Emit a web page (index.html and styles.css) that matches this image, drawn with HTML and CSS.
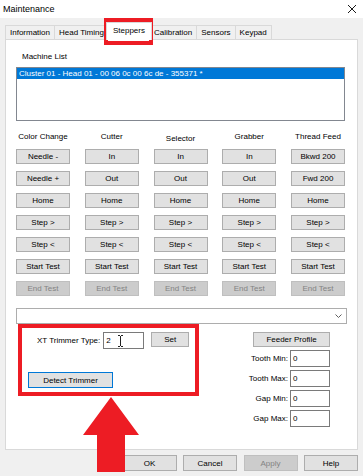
FILE: index.html
```html
<!DOCTYPE html>
<html lang="en">
<head>
<meta charset="UTF-8">
<title>Maintenance</title>
<link rel="stylesheet" href="styles.css">
</head>
<body>
<div class="titlebar">
    <span class="title">Maintenance</span>
    <svg class="close" width="10" height="10" viewBox="0 0 10 10"><path d="M1 1L9 9M9 1L1 9" stroke="#1a1a1a" stroke-width="1"/></svg>
</div>
<div class="tabs">
    <div class="tab first">Information</div>
    <div class="tab">Head Timing</div>
    <div class="tab active">Steppers</div>
    <div class="tab">Calibration</div>
    <div class="tab">Sensors</div>
    <div class="tab">Keypad</div>
</div>
<div class="panel">
    <div class="list-label">Machine List</div>
    <div class="listbox">
        <div class="item selected">Cluster 01 - Head 01 - 00 06 0c 00 6c de - 355371 *</div>
    </div>
    <div class="grid">
        <div class="col-head">Color Change</div>
        <div class="col-head">Cutter</div>
        <div class="col-head low">Selector</div>
        <div class="col-head">Grabber</div>
        <div class="col-head">Thread Feed</div>

        <button class="btn">Needle -</button>
        <button class="btn">In</button>
        <button class="btn">In</button>
        <button class="btn">In</button>
        <button class="btn">Bkwd 200</button>

        <button class="btn">Needle +</button>
        <button class="btn">Out</button>
        <button class="btn">Out</button>
        <button class="btn">Out</button>
        <button class="btn">Fwd 200</button>

        <button class="btn">Home</button>
        <button class="btn">Home</button>
        <button class="btn">Home</button>
        <button class="btn">Home</button>
        <button class="btn">Home</button>

        <button class="btn">Step &gt;</button>
        <button class="btn">Step &gt;</button>
        <button class="btn">Step &gt;</button>
        <button class="btn">Step &gt;</button>
        <button class="btn">Step &gt;</button>

        <button class="btn">Step &lt;</button>
        <button class="btn">Step &lt;</button>
        <button class="btn">Step &lt;</button>
        <button class="btn">Step &lt;</button>
        <button class="btn">Step &lt;</button>

        <button class="btn">Start Test</button>
        <button class="btn">Start Test</button>
        <button class="btn">Start Test</button>
        <button class="btn">Start Test</button>
        <button class="btn">Start Test</button>

        <button class="btn" disabled>End Test</button>
        <button class="btn" disabled>End Test</button>
        <button class="btn" disabled>End Test</button>
        <button class="btn" disabled>End Test</button>
        <button class="btn" disabled>End Test</button>
    </div>
    <div class="combo">
        <svg width="7" height="4" viewBox="0 0 7 4"><path d="M0.5 0.5L3.5 3.5L6.5 0.5" fill="none" stroke="#606060" stroke-width="1"/></svg>
    </div>
    <div class="bottom">
        <div class="trimmer">
            <div class="trimmer-row">
                <label class="field-label">XT Trimmer Type:</label>
                <div class="textbox">2
                    <svg class="ibeam" width="5" height="12" viewBox="0 0 5 12"><path d="M0 0.5H2M3 0.5H5M2.5 1V11M0 11.5H2M3 11.5H5" stroke="#222" stroke-width="1" fill="none"/></svg>
                </div>
                <button class="btn btn-set">Set</button>
            </div>
            <button class="btn btn-default">Detect Trimmer</button>
        </div>
        <div class="feeder">
            <button class="btn btn-feeder">Feeder Profile</button>
            <div class="field"><label class="field-label">Tooth Min:</label><div class="textbox small">0</div></div>
            <div class="field"><label class="field-label">Tooth Max:</label><div class="textbox small">0</div></div>
            <div class="field"><label class="field-label">Gap Min:</label><div class="textbox small">0</div></div>
            <div class="field"><label class="field-label">Gap Max:</label><div class="textbox small">0</div></div>
        </div>
    </div>
</div>
<div class="actions">
    <button class="btn btn-action">OK</button>
    <button class="btn btn-action">Cancel</button>
    <button class="btn btn-action" disabled>Apply</button>
    <button class="btn btn-action">Help</button>
</div>

<div class="mark mark-tab"></div>
<div class="mark mark-trimmer"></div>
<svg class="arrow" width="363" height="476" viewBox="0 0 363 476">
    <polygon points="111,397 139,435 125,435 125,472 97,472 97,435 83,435" fill="#ed1c24"/>
</svg>
</body>
</html>
```

FILE: styles.css
```css
* {
    box-sizing: border-box;
}
body {
    margin: 0;
    width: 363px;
    height: 476px;
    overflow: hidden;
    position: relative;
    background-color: #f0f0f0;
    font-family: "Liberation Sans", Arial, sans-serif;
    font-size: 8px;
    color: #000;
}
.titlebar {
    height: 18px;
    background-color: #fff;
    display: flex;
    align-items: center;
    justify-content: space-between;
    padding: 0 6px 0 3px;
}
.title {
    font-size: 9px;
}
.tabs {
    display: flex;
    align-items: flex-end;
    height: 21px;
    padding-left: 5px;
}
.tab {
    height: 14px;
    line-height: 13px;
    padding: 0 4px;
    border: 1px solid #d9d9d9;
    border-bottom: none;
    border-left: none;
    background-color: #f0f0f0;
    white-space: nowrap;
}
.tab.first {
    border-left: 1px solid #d9d9d9;
}
.tab.active {
    height: 18px;
    line-height: 15px;
    padding: 0 6px;
    margin: 0 -2px -1px -3px;
    border-left: 1px solid #d9d9d9;
    background-color: #fff;
    position: relative;
    z-index: 1;
}
.panel {
    margin-left: 5px;
    width: 353px;
    height: 411px;
    background-color: #fff;
    border: 1px solid #d9d9d9;
    padding: 12px 0 0 10px;
}
.list-label {
    margin-left: 6px;
    line-height: 10px;
}
.listbox {
    margin-top: 5px;
    width: 329px;
    height: 54px;
    border: 1px solid #828790;
}
.item {
    line-height: 11px;
    padding-left: 2px;
    white-space: nowrap;
}
.item.selected {
    background-color: #0078d7;
    color: #fff;
}
.grid {
    margin-top: 11px;
    width: 329px;
    display: grid;
    grid-template-columns: repeat(5, 54px);
    grid-template-rows: 10px;
    grid-auto-rows: 15px;
    justify-content: space-between;
    row-gap: 7px;
}
.col-head {
    text-align: center;
    line-height: 10px;
    white-space: nowrap;
}
.col-head.low {
    padding-top: 2px;
}
.btn {
    height: 15px;
    padding: 0;
    font: inherit;
    line-height: 13px;
    color: #000;
    background-color: #e1e1e1;
    border: 1px solid #adadad;
    white-space: nowrap;
}
.btn:disabled {
    background-color: #cccccc;
    border-color: #bfbfbf;
    color: #838383;
}
.combo {
    margin-top: 12px;
    width: 331px;
    height: 16px;
    border: 1px solid #adadad;
    display: flex;
    align-items: center;
    justify-content: flex-end;
    padding-right: 4px;
}
.bottom {
    display: flex;
    margin-top: 8px;
}
.trimmer {
    width: 224px;
    display: flex;
    flex-direction: column;
    align-items: flex-start;
}
.trimmer-row {
    display: flex;
    align-items: flex-start;
    margin-left: 21px;
}
.field-label {
    line-height: 17px;
    margin-right: 3px;
    white-space: nowrap;
}
.textbox {
    width: 41px;
    height: 17px;
    border: 1px solid #7a7a7a;
    background-color: #fff;
    padding-left: 2px;
    line-height: 15px;
    display: flex;
    align-items: center;
}
.textbox.small {
    width: 40px;
    align-items: flex-start;
}
.ibeam {
    margin-left: 7px;
}
.btn-set {
    width: 38px;
    margin-left: 7px;
}
.btn-default {
    width: 85px;
    height: 16px;
    margin-top: 23px;
    margin-left: 12px;
    border-color: #0078d7;
}
.feeder {
    width: 90px;
    display: flex;
    flex-direction: column;
    align-items: flex-end;
    gap: 3px;
}
.btn-feeder {
    width: 77px;
}
.field {
    display: flex;
    justify-content: flex-end;
}
.field .field-label {
    margin-right: 2px;
}
.actions {
    display: flex;
    justify-content: flex-end;
    gap: 6.5px;
    padding-right: 5px;
    margin-top: 5px;
}
.btn-action {
    width: 54px;
    height: 16px;
}
.mark {
    position: absolute;
    border: 4px solid #ed1c24;
    pointer-events: none;
}
.mark-tab {
    left: 104px;
    top: 18px;
    width: 49px;
    height: 27px;
}
.mark-trimmer {
    left: 18px;
    top: 324px;
    width: 181px;
    height: 72px;
}
.arrow {
    position: absolute;
    left: 0;
    top: 0;
    pointer-events: none;
}
```
